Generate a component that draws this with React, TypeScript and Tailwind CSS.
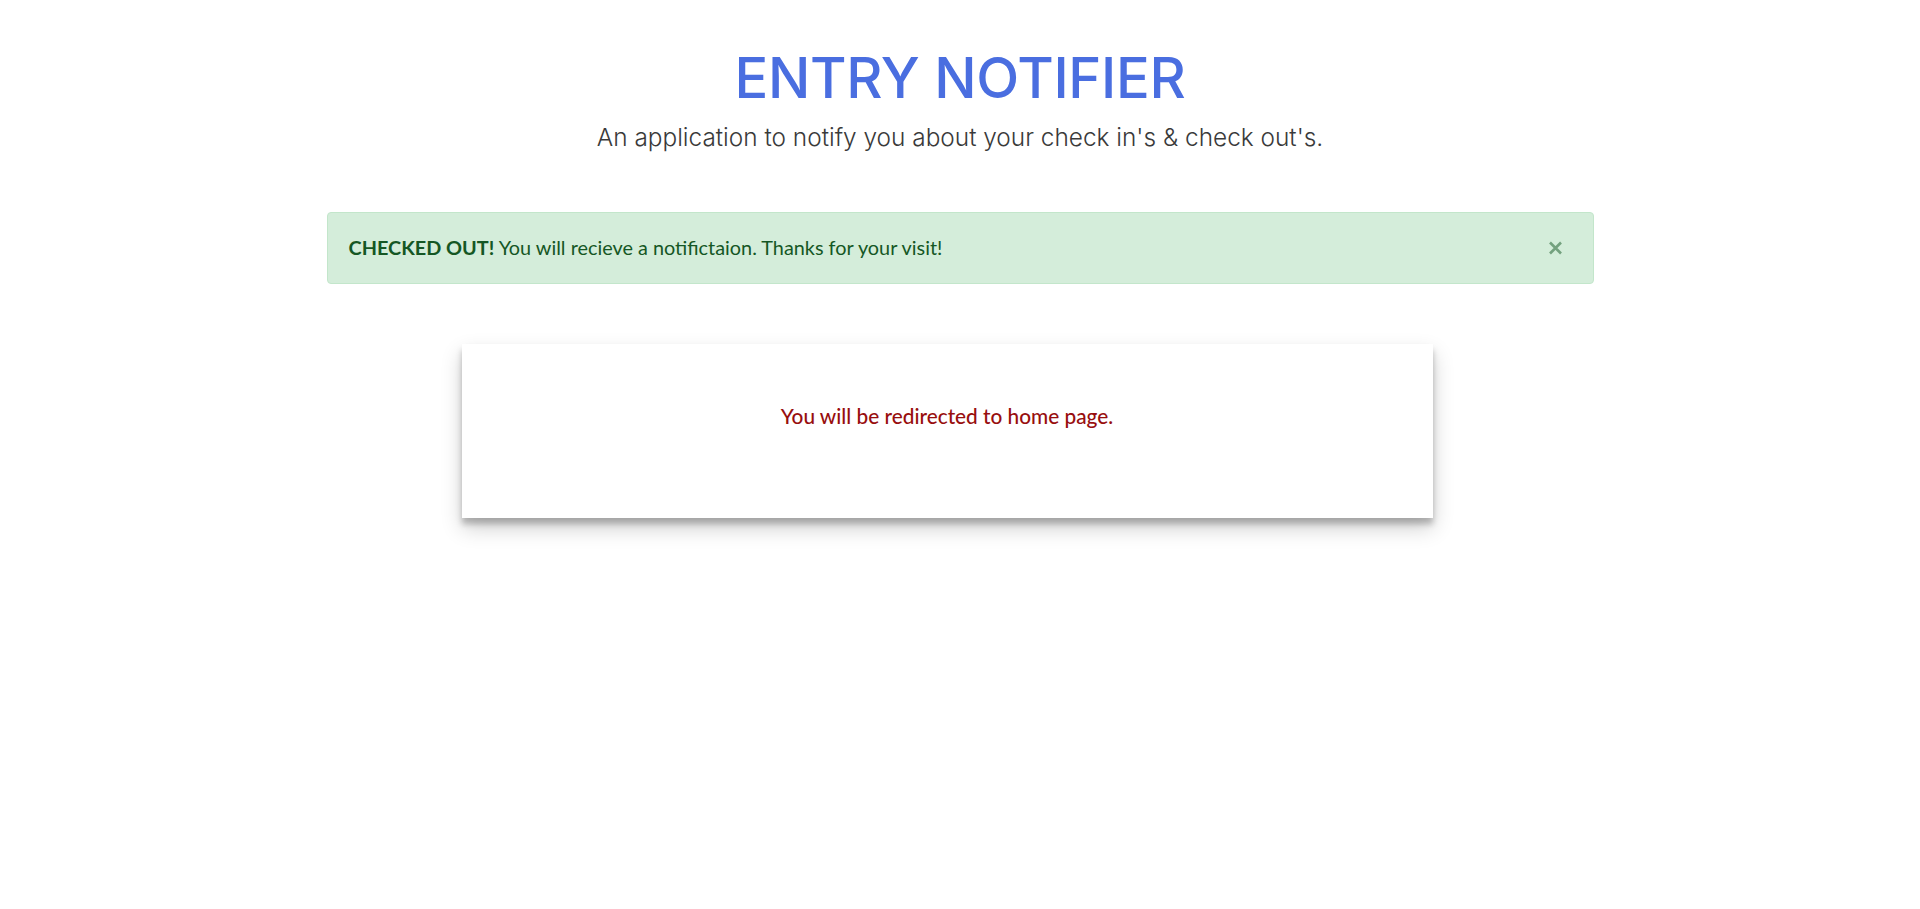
import React from "react";

export default function App() {
  return (
    <div className="min-h-[909px] bg-white">
      <header className="pt-[45px] text-center">
        <h1 className="text-[56px] leading-[1.2] font-medium text-[#4a6ee0] font-['Inter',sans-serif] tracking-[-0.3px]">
          ENTRY NOTIFIER
        </h1>
        <p className="mt-[7px] text-[24.4px] leading-[1.5] font-light text-[#3a3a3a] font-['Inter',sans-serif]">
          An application to notify you about your check in's &amp; check out's.
        </p>
      </header>
      <main className="w-[1267px] mx-auto mt-[56px]">
        <div className="relative h-[72px] flex items-center pl-[21px] pr-[50px] bg-[#d4edda] border border-[#c3e6cb] rounded-[4px] text-[#155724] text-[19.85px] font-['Lato',sans-serif]">
          <p>
            <strong className="font-bold">CHECKED OUT!</strong> You will recieve a notifictaion. Thanks for your visit!
          </p>
          <button className="absolute right-[30px] top-1/2 -translate-y-1/2 flex text-[#155724] opacity-50">
            <svg width="15" height="15" viewBox="0 0 15 15">
              <path d="M2 2 L13 13 M13 2 L2 13" stroke="currentColor" strokeWidth="2.6" strokeLinecap="butt" />
            </svg>
          </button>
        </div>
        <div className="ml-[135px] mt-[60px] w-[971px] h-[174px] bg-white shadow-[0_10px_20px_rgba(0,0,0,0.19),0_6px_6px_rgba(0,0,0,0.23)] flex justify-center pt-[58px]">
          <p className="text-[20.8px] font-medium text-[#980e0e] font-['Lato',sans-serif] leading-[28px]">
            You will be redirected to home page.
          </p>
        </div>
      </main>
    </div>
  );
}
